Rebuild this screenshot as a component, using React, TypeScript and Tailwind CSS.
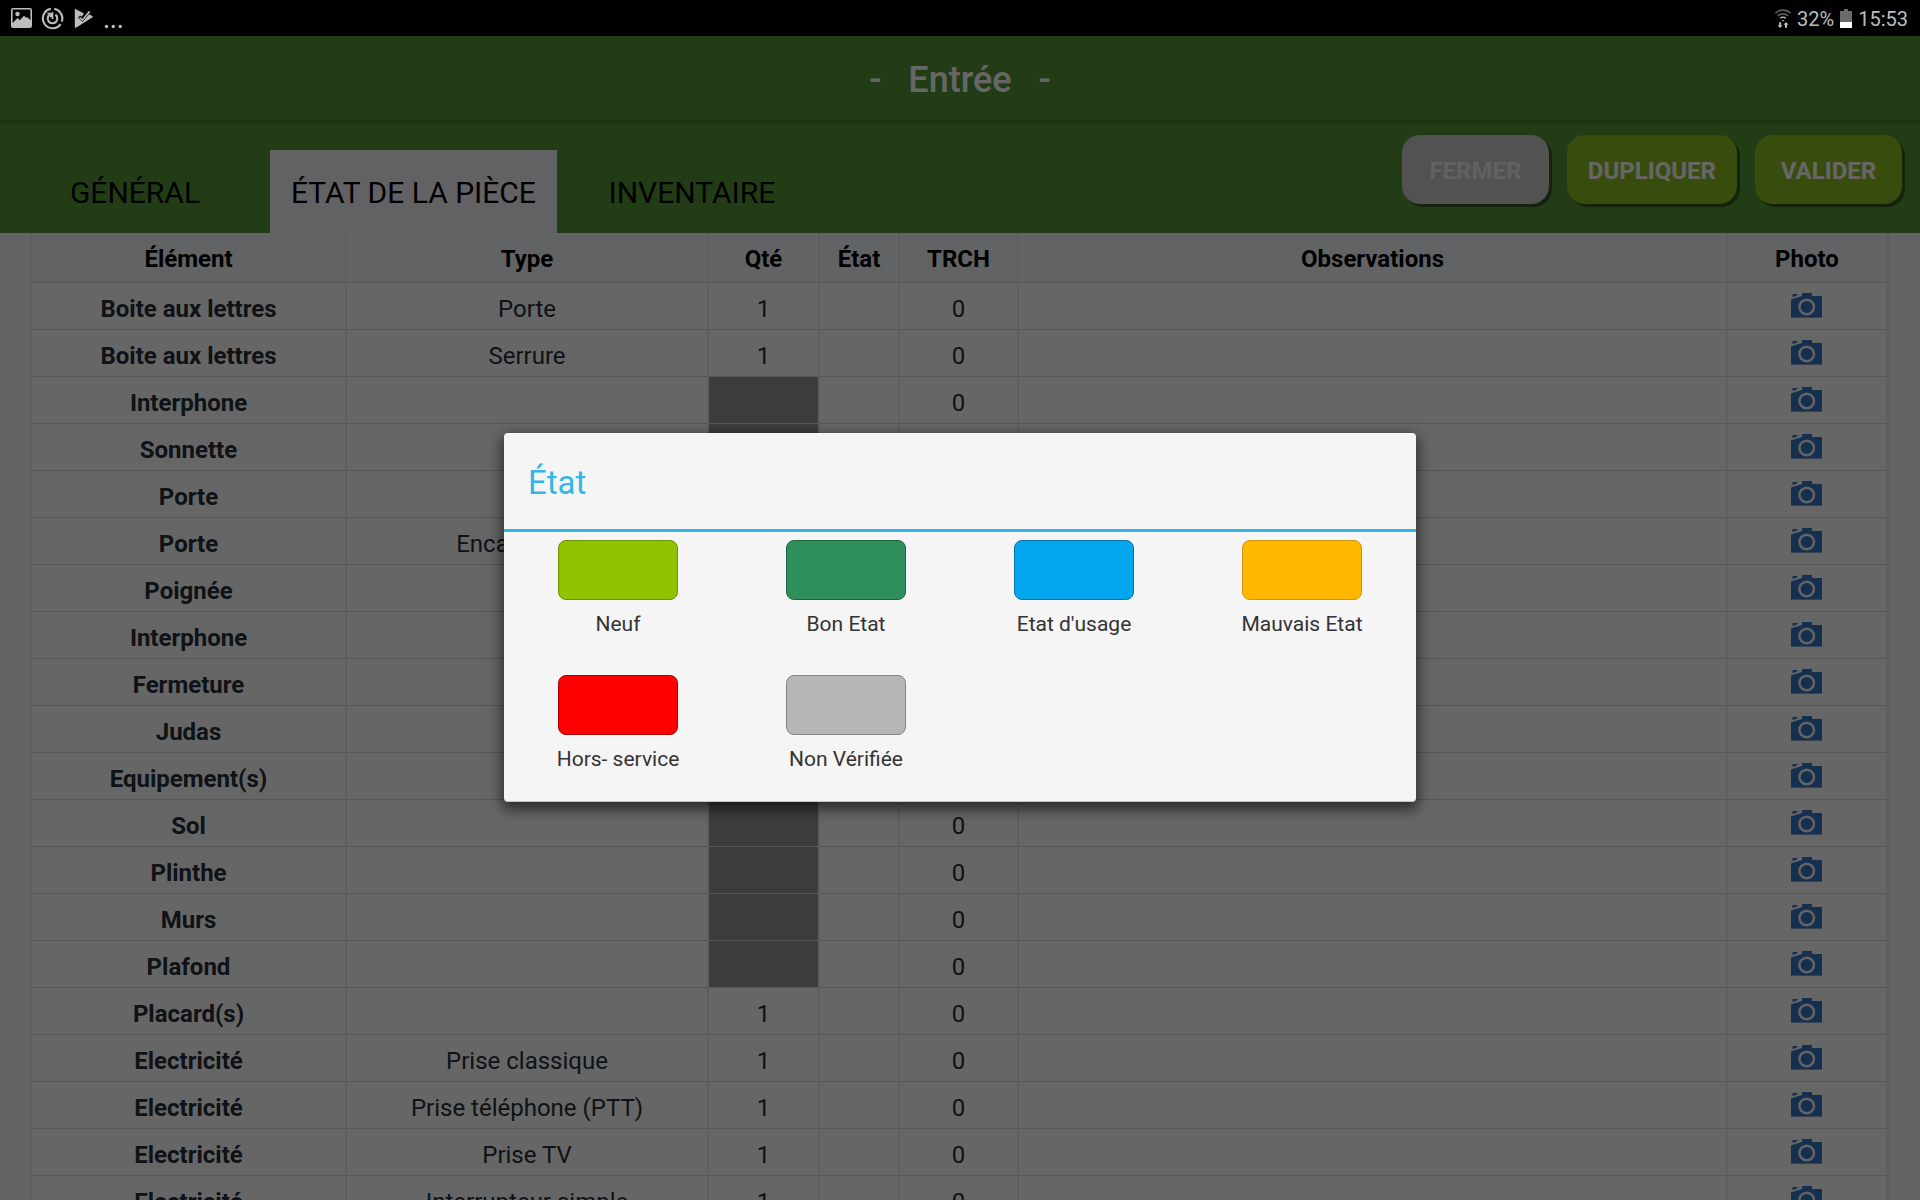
import React, { useState } from 'react';

interface Row {
  element: string;
  type: string;
  // null: the quantity does not apply to this element
  qty: number | null;
  trch: number;
}

interface EtatOption {
  label: string;
  color: string;
}

const rows: Row[] = [
  { element: 'Boite aux lettres', type: 'Porte', qty: 1, trch: 0 },
  { element: 'Boite aux lettres', type: 'Serrure', qty: 1, trch: 0 },
  { element: 'Interphone', type: '', qty: null, trch: 0 },
  { element: 'Sonnette', type: '', qty: null, trch: 0 },
  { element: 'Porte', type: '', qty: 1, trch: 0 },
  { element: 'Porte', type: 'Encadrement', qty: 1, trch: 0 },
  { element: 'Poignée', type: '', qty: 1, trch: 0 },
  { element: 'Interphone', type: '', qty: 1, trch: 0 },
  { element: 'Fermeture', type: '', qty: 1, trch: 0 },
  { element: 'Judas', type: '', qty: 1, trch: 0 },
  { element: 'Equipement(s)', type: '', qty: 1, trch: 0 },
  { element: 'Sol', type: '', qty: null, trch: 0 },
  { element: 'Plinthe', type: '', qty: null, trch: 0 },
  { element: 'Murs', type: '', qty: null, trch: 0 },
  { element: 'Plafond', type: '', qty: null, trch: 0 },
  { element: 'Placard(s)', type: '', qty: 1, trch: 0 },
  { element: 'Electricité', type: 'Prise classique', qty: 1, trch: 0 },
  { element: 'Electricité', type: 'Prise téléphone (PTT)', qty: 1, trch: 0 },
  { element: 'Electricité', type: 'Prise TV', qty: 1, trch: 0 },
  { element: 'Electricité', type: 'Interrupteur simple', qty: 1, trch: 0 },
];

const etats: EtatOption[] = [
  { label: 'Neuf', color: 'bg-[#90c400] border-[#6b9200]' },
  { label: 'Bon Etat', color: 'bg-[#2e8f5b] border-[#1f6640]' },
  { label: "Etat d'usage", color: 'bg-[#04a6ee] border-[#0374a8]' },
  { label: 'Mauvais Etat', color: 'bg-[#ffb700] border-[#cc9410]' },
  { label: 'Hors- service', color: 'bg-[#ff0000] border-[#a80000]' },
  { label: 'Non Vérifiée', color: 'bg-[#b6b6b6] border-[#868686]' },
];

const tabs = ['GÉNÉRAL', 'ÉTAT DE LA PIÈCE', 'INVENTAIRE'];

const CameraIcon = () => (
  <svg width="31" height="25" viewBox="0 0 31 25" aria-hidden="true">
    <path fill="#3577c4" d="M0 6.500 7 4.200 11 3V0h10v3h10v21H0z" />
    <path fill="#3577c4" d="M1.500 1h5.500L5 3l-3.500 1z" />
    <path fill="#86a9d4" d="M0 24h31v1H0z" />
    <circle cx="15.700" cy="14" r="7.300" fill="none" stroke="#f8f8f8" strokeWidth="2.500" />
  </svg>
);

const StatusBar = () => (
  <div className="flex h-9 shrink-0 items-center justify-between bg-black pr-3 pl-[11px] text-[#bdbdbd]">
    <div className="flex items-center">
      <svg width="22" height="22" viewBox="0 0 22 22" aria-hidden="true">
        <path fill="currentColor" fillRule="evenodd" d="M2 1h17a2 2 0 0 1 2 2v16a2 2 0 0 1-2 2H2a2 2 0 0 1-2-2V3a2 2 0 0 1 2-2zm-.4 1.6V16l5-5 2.2 2.3 4.2-4.5 2.2 2 1.3-.6 2.9 3V2.6z" />
        <circle cx="6.5" cy="7" r="2.2" fill="currentColor" />
      </svg>
      <svg className="ml-2" width="23" height="23" viewBox="0 0 24 24" fill="none" stroke="currentColor" strokeWidth="2.2" aria-hidden="true">
        <path d="M10.3 1.9A10.2 10.2 0 1 0 20.5 17.8" />
        <path d="M13.8 1.9A10.2 10.2 0 0 1 21.7 15.2" />
        <path d="M15 8A5 5 0 1 1 9 8" />
        <path d="M12 5.5v7M6.8 7h3.4v3.6" strokeWidth="1.8" />
      </svg>
      <svg className="ml-2.5" width="20" height="22" viewBox="0 0 20 22" aria-hidden="true">
        <path fill="currentColor" d="M1.500 2 10 6.400 7.600 9.800 6.100 8.500 4 10.800l4.600 4.200 6.600-7.800 3 1.900c.8.5.8 1 0 1.500L2 20.700c-.8.3-1.200 0-1.200-.7V2.700c0-.7.3-.9.7-.7z" />
        <path fill="currentColor" d="m6.100 10 2.300 2.100 6.600-8.300 1.300 1.100-7.800 9.300-3.600-3.200z" />
      </svg>
      <svg className="ml-2.5" width="20" height="22" viewBox="0 0 20 22" fill="currentColor" aria-hidden="true">
        <circle cx="2.5" cy="19.5" r="1.7" />
        <circle cx="9.3" cy="19.5" r="1.7" />
        <circle cx="16.2" cy="19.5" r="1.7" />
      </svg>
    </div>
    <div className="flex items-center gap-1.5 pt-0.5 text-xl">
      <svg width="16" height="20" viewBox="0 0 16 20" fill="none" aria-hidden="true">
        <path stroke="#5c5c5c" strokeWidth="1.6" d="M.5 4.2a10.6 10.6 0 0 1 15 0M2.8 7a7.4 7.4 0 0 1 10.4 0" />
        <path stroke="#bdbdbd" strokeWidth="1.4" d="M5.2 9.3a4 4 0 0 1 5.6 0" />
        <path fill="#bdbdbd" d="m6.6 11 1.4 1.4L9.4 11zM4.1 13.2h2v3h1.5L5.1 19l-2.5-2.8h1.5zM10 18.8v-3H8.500l2.500-2.800 2.500 2.800H12v3z" />
      </svg>
      <span>32%</span>
      <svg width="12" height="20" viewBox="0 0 12 20" aria-hidden="true">
        <path fill="#6b6b6b" d="M4 0h4v2h4v11H0V2h4z" />
        <path fill="#fff" d="M0 13h12v6H0z" />
      </svg>
      <span>15:53</span>
    </div>
  </div>
);

const headCell = 'h-[50px] border-b border-l-2 border-b-[#d6dade] border-l-[#e7eaef] bg-[#f6f8fb] px-0 pt-0.5 pb-0 font-bold text-black';
const bodyCell = 'h-[47px] border-b border-l-2 border-b-[#dadada] border-l-[#eceef0] bg-white px-2 pt-1.5 pb-0';

const RoomTable: React.FC = () => (
  <table className="w-full table-fixed border-separate border-spacing-0 text-center text-2xl leading-8 text-[#262e38]">
    <colgroup>
      <col className="w-[315px]" />
      <col className="w-[362px]" />
      <col className="w-[111px]" />
      <col className="w-20" />
      <col className="w-[119px]" />
      <col />
      <col className="w-[164px]" />
    </colgroup>
    <thead>
      <tr>
        <th scope="col" className={headCell}>Élément</th>
        <th scope="col" className={headCell}>Type</th>
        <th scope="col" className={headCell}>Qté</th>
        <th scope="col" className={headCell}>État</th>
        <th scope="col" className={headCell}>TRCH</th>
        <th scope="col" className={headCell}>Observations</th>
        <th scope="col" className={`${headCell} border-r-4 border-r-[#e7eaef]`}>Photo</th>
      </tr>
    </thead>
    <tbody>
      {rows.map((row, i) => (
        <tr key={i}>
          <th scope="row" className={`${bodyCell} font-bold`}>{row.element}</th>
          <td className={bodyCell}>{row.type}</td>
          <td className={row.qty === null ? `${bodyCell} bg-[#979797]!` : bodyCell}>{row.qty}</td>
          <td className={bodyCell}></td>
          <td className={bodyCell}>{row.trch}</td>
          <td className={bodyCell}></td>
          <td className={`${bodyCell} border-r-4 border-r-[#e7eaef]`}>
            <button type="button" aria-label="Photo" className="mx-auto -mt-2 block w-8">
              <CameraIcon />
            </button>
          </td>
        </tr>
      ))}
    </tbody>
  </table>
);

const EtatDialog: React.FC<{ onSelect: (etat: string) => void }> = ({ onSelect }) => (
  <div className="absolute inset-0 flex items-center justify-center bg-black/60 pb-0.5">
    <div
      role="dialog"
      aria-modal="true"
      aria-labelledby="etat-title"
      className="w-[47.5%] rounded-[4px] border-b border-[#c4c4c4] bg-[#f5f5f5] shadow-[0_5px_14px_2px_rgba(0,0,0,0.6)]"
    >
      <h2 id="etat-title" className="flex h-24 items-center px-6 pt-1 text-[33px] text-[#33b5e5]">État</h2>
      <div className="grid grid-cols-4 gap-y-[37px] border-t-3 border-[#33b5e5] pt-2 pb-7">
        {etats.map(etat => (
          <button
            key={etat.label}
            type="button"
            onClick={() => onSelect(etat.label)}
            className="flex flex-col items-center gap-2.5 text-[21px] leading-7 text-[#333333]"
          >
            <span className={`h-[60px] w-[120px] rounded-lg border ${etat.color}`} />
            {etat.label}
          </button>
        ))}
      </div>
    </div>
  </div>
);

const actionButton = 'h-[69px] min-w-[147px] rounded-[18px] px-[21px] pt-0.5 text-2xl font-bold shadow-[3px_3px_0_rgba(0,0,0,0.42)]';

export default function App() {
  const [activeTab, setActiveTab] = useState('ÉTAT DE LA PIÈCE');
  const [isEtatOpen, setIsEtatOpen] = useState(true);

  return (
    <div className="flex h-screen flex-col overflow-hidden font-[Roboto,sans-serif]">
      <StatusBar />
      <main className="relative flex-1 overflow-hidden bg-[#f4f7fb]">
        <header className="bg-[#559937]">
          <h1 className="flex h-[85px] items-center justify-center border-b border-[#42802b] pt-1 text-4xl font-medium whitespace-pre text-white shadow-[0_2px_4px_rgba(0,0,0,0.15)]">
            {'-   Entrée   -'}
          </h1>
          <div className="flex items-end justify-between pr-[18px]">
            <div role="tablist" className="flex">
              {tabs.map(tab => (
                <button
                  key={tab}
                  type="button"
                  role="tab"
                  aria-selected={tab === activeTab}
                  onClick={() => setActiveTab(tab)}
                  className={`h-[83px] min-w-[270px] px-[21px] pt-0.5 text-3xl text-black ${tab === activeTab ? 'bg-[#f5f6f9]' : ''}`}
                >
                  {tab}
                </button>
              ))}
            </div>
            <div className="flex gap-[18px] pt-3.5 pb-[29px]">
              <button type="button" className={`${actionButton} bg-[#cdcdcd] text-[#f2f2f2]`}>FERMER</button>
              <button type="button" className={`${actionButton} bg-[#8dbe24] text-white`}>DUPLIQUER</button>
              <button type="button" className={`${actionButton} bg-[#8dbe24] text-white`}>VALIDER</button>
            </div>
          </div>
        </header>
        <div className="px-[30px]">
          <RoomTable />
        </div>
        {isEtatOpen && <EtatDialog onSelect={() => setIsEtatOpen(false)} />}
      </main>
    </div>
  );
}
